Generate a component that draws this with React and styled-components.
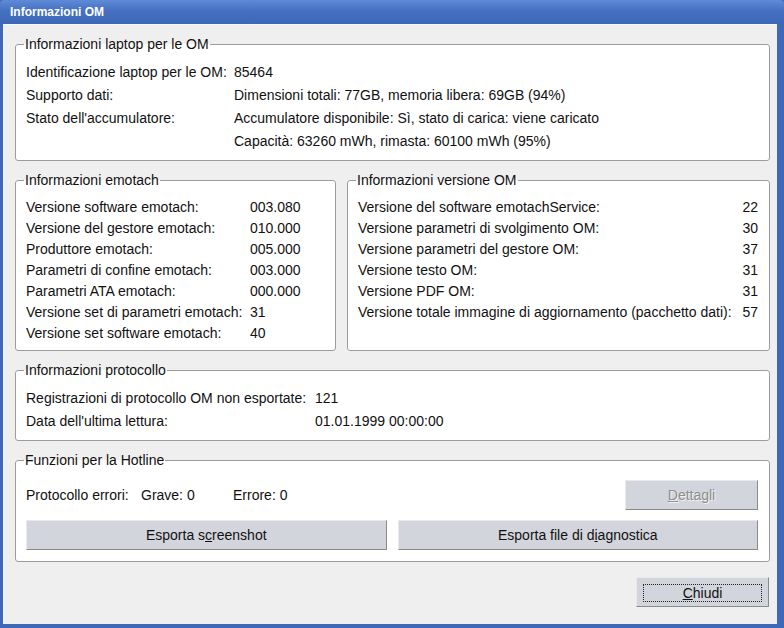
import React from 'react';
import styled, { createGlobalStyle } from 'styled-components';

const Global = createGlobalStyle`
  html, body { margin: 0; padding: 0; background: #3e68b8; }
  body {
    font-family: "Liberation Sans", Arial, sans-serif;
    font-size: 14px;
    color: #111;
  }
  * { box-sizing: border-box; }
`;

const Window = styled.div`
  width: 784px;
  height: 628px;
  display: flex;
  flex-direction: column;
  background: #3e68b8;
  border-radius: 4px 4px 0 0;
  overflow: hidden;
`;

const TitleBar = styled.div`
  height: 24px;
  flex: none;
  display: flex;
  align-items: center;
  padding-left: 10px;
  background: linear-gradient(#5f8ad6, #4671c2 45%, #3d67b7);
  color: #fff;
  font-weight: bold;
  font-size: 12px;
`;

const Frame = styled.div`
  flex: 1;
  display: flex;
  padding: 0 7px 4px 3px;
`;

const Client = styled.div`
  flex: 1;
  display: flex;
  flex-direction: column;
  gap: 11px;
  background: #efefef;
  border-left: 1px solid #f8f8f8;
  border-top: 1px solid #f8f8f8;
  padding: 11px 7px 0 11px;
`;

const Group = styled.fieldset`
  margin: 0;
  min-width: 0;
  border: 1px solid #9c9c9c;
  border-radius: 3px;
  background: #fff;
  padding: ${p => p.$pad || '8px 10px 8px 10px'};
  flex: ${p => p.$flexValue || 'none'};
  display: ${p => (p.$flex ? 'flex' : 'block')};
  flex-direction: column;
  gap: 10px;
`;

const Legend = styled.legend`
  padding: 0 1px;
  margin-left: -2px;
  line-height: 16px;
  font-size: 14px;
  color: #111;
`;

const InfoGrid = styled.div`
  display: grid;
  grid-template-columns: ${p => p.$cols};
  grid-auto-rows: ${p => p.$row}px;
  align-items: center;
  white-space: nowrap;
`;

const Value = styled.span`
  text-align: ${p => (p.$right ? 'right' : 'left')};
`;

const Pair = styled.div`
  display: flex;
  gap: 11px;
  height: 179px;
`;

const HotRow = styled.div`
  display: flex;
  align-items: center;
  height: 30px;
`;

const Cell = styled.span`
  width: ${p => p.$w}px;
  flex: none;
  white-space: nowrap;
`;

const Spacer = styled.div`
  flex: 1;
`;

const ButtonRow = styled.div`
  display: grid;
  grid-template-columns: 1fr 1fr;
  gap: 11px;
`;

const Button = styled.button`
  height: 30px;
  width: ${p => (p.$w ? `${p.$w}px` : 'auto')};
  display: flex;
  align-items: center;
  justify-content: center;
  padding: 0;
  font-family: "Liberation Sans", Arial, sans-serif;
  font-size: 14px;
  color: ${p => (p.disabled ? '#8e8e8e' : '#111')};
  text-shadow: ${p => (p.disabled ? '1px 1px 0 #f2f2f2' : 'none')};
  background: #d3d5dc;
  border: 1px solid;
  border-color: #e9e9ec #8a8a8a #8a8a8a #e9e9ec;
  border-radius: 0;
  cursor: default;
`;

const FocusRing = styled.span`
  align-self: stretch;
  flex: 1;
  margin: 6px 6px 4px 6px;
  border: 1px dotted #222;
  display: flex;
  align-items: center;
  justify-content: center;
`;

const Footer = styled.div`
  display: flex;
  justify-content: flex-end;
  padding: 4px 1px 0 0;
`;

const laptop = [
  ['Identificazione laptop per le OM:', '85464'],
  ['Supporto dati:', 'Dimensioni totali: 77GB, memoria libera: 69GB (94%)'],
  ["Stato dell'accumulatore:", 'Accumulatore disponibile: Sì, stato di carica: viene caricato'],
  ['', 'Capacità: 63260 mWh, rimasta: 60100 mWh (95%)'],
];

const emotach = [
  ['Versione software emotach:', '003.080'],
  ['Versione del gestore emotach:', '010.000'],
  ['Produttore emotach:', '005.000'],
  ['Parametri di confine emotach:', '003.000'],
  ['Parametri ATA emotach:', '000.000'],
  ['Versione set di parametri emotach:', '31'],
  ['Versione set software emotach:', '40'],
];

const versions = [
  ['Versione del software emotachService:', '22'],
  ['Versione parametri di svolgimento OM:', '30'],
  ['Versione parametri del gestore OM:', '37'],
  ['Versione testo OM:', '31'],
  ['Versione PDF OM:', '31'],
  ['Versione totale immagine di aggiornamento (pacchetto dati):', '57'],
];

const protocol = [
  ['Registrazioni di protocollo OM non esportate:', '121'],
  ["Data dell'ultima lettura:", '01.01.1999 00:00:00'],
];

function Rows({ data, right }) {
  return data.map(([l, v], i) => (
    <React.Fragment key={i}>
      <span>{l}</span>
      <Value $right={right}>{v}</Value>
    </React.Fragment>
  ));
}

export default function App() {
  return (
    <>
      <Global />
      <Window>
        <TitleBar>Informazioni OM</TitleBar>
        <Frame>
          <Client>
            <Group>
              <Legend>Informazioni laptop per le OM</Legend>
              <InfoGrid $cols="208px 1fr" $row={23}>
                <Rows data={laptop} />
              </InfoGrid>
            </Group>
            <Pair>
              <Group $flexValue="0 0 321px" $pad="8px 10px 6px 10px">
                <Legend>Informazioni emotach</Legend>
                <InfoGrid $cols="224px 1fr" $row={21}>
                  <Rows data={emotach} />
                </InfoGrid>
              </Group>
              <Group $flexValue="1" $pad="8px 11px 6px 10px">
                <Legend>Informazioni versione OM</Legend>
                <InfoGrid $cols="1fr auto" $row={21}>
                  <Rows data={versions} right />
                </InfoGrid>
              </Group>
            </Pair>
            <Group>
              <Legend>Informazioni protocollo</Legend>
              <InfoGrid $cols="289px 1fr" $row={23}>
                <Rows data={protocol} />
              </InfoGrid>
            </Group>
            <Group $flex $pad="12px 11px 11px 10px">
              <Legend>Funzioni per la Hotline</Legend>
              <HotRow>
                <Cell $w={115}>Protocollo errori:</Cell>
                <Cell $w={92}>Grave: 0</Cell>
                <Cell $w={80}>Errore: 0</Cell>
                <Spacer />
                <Button disabled $w={133}><u>D</u>ettagli</Button>
              </HotRow>
              <ButtonRow>
                <Button>Esporta s<u>c</u>reenshot</Button>
                <Button>Esporta file di d<u>i</u>agnostica</Button>
              </ButtonRow>
            </Group>
            <Footer>
              <Button $w={133}>
                <FocusRing><u>C</u>hiudi</FocusRing>
              </Button>
            </Footer>
          </Client>
        </Frame>
      </Window>
    </>
  );
}
